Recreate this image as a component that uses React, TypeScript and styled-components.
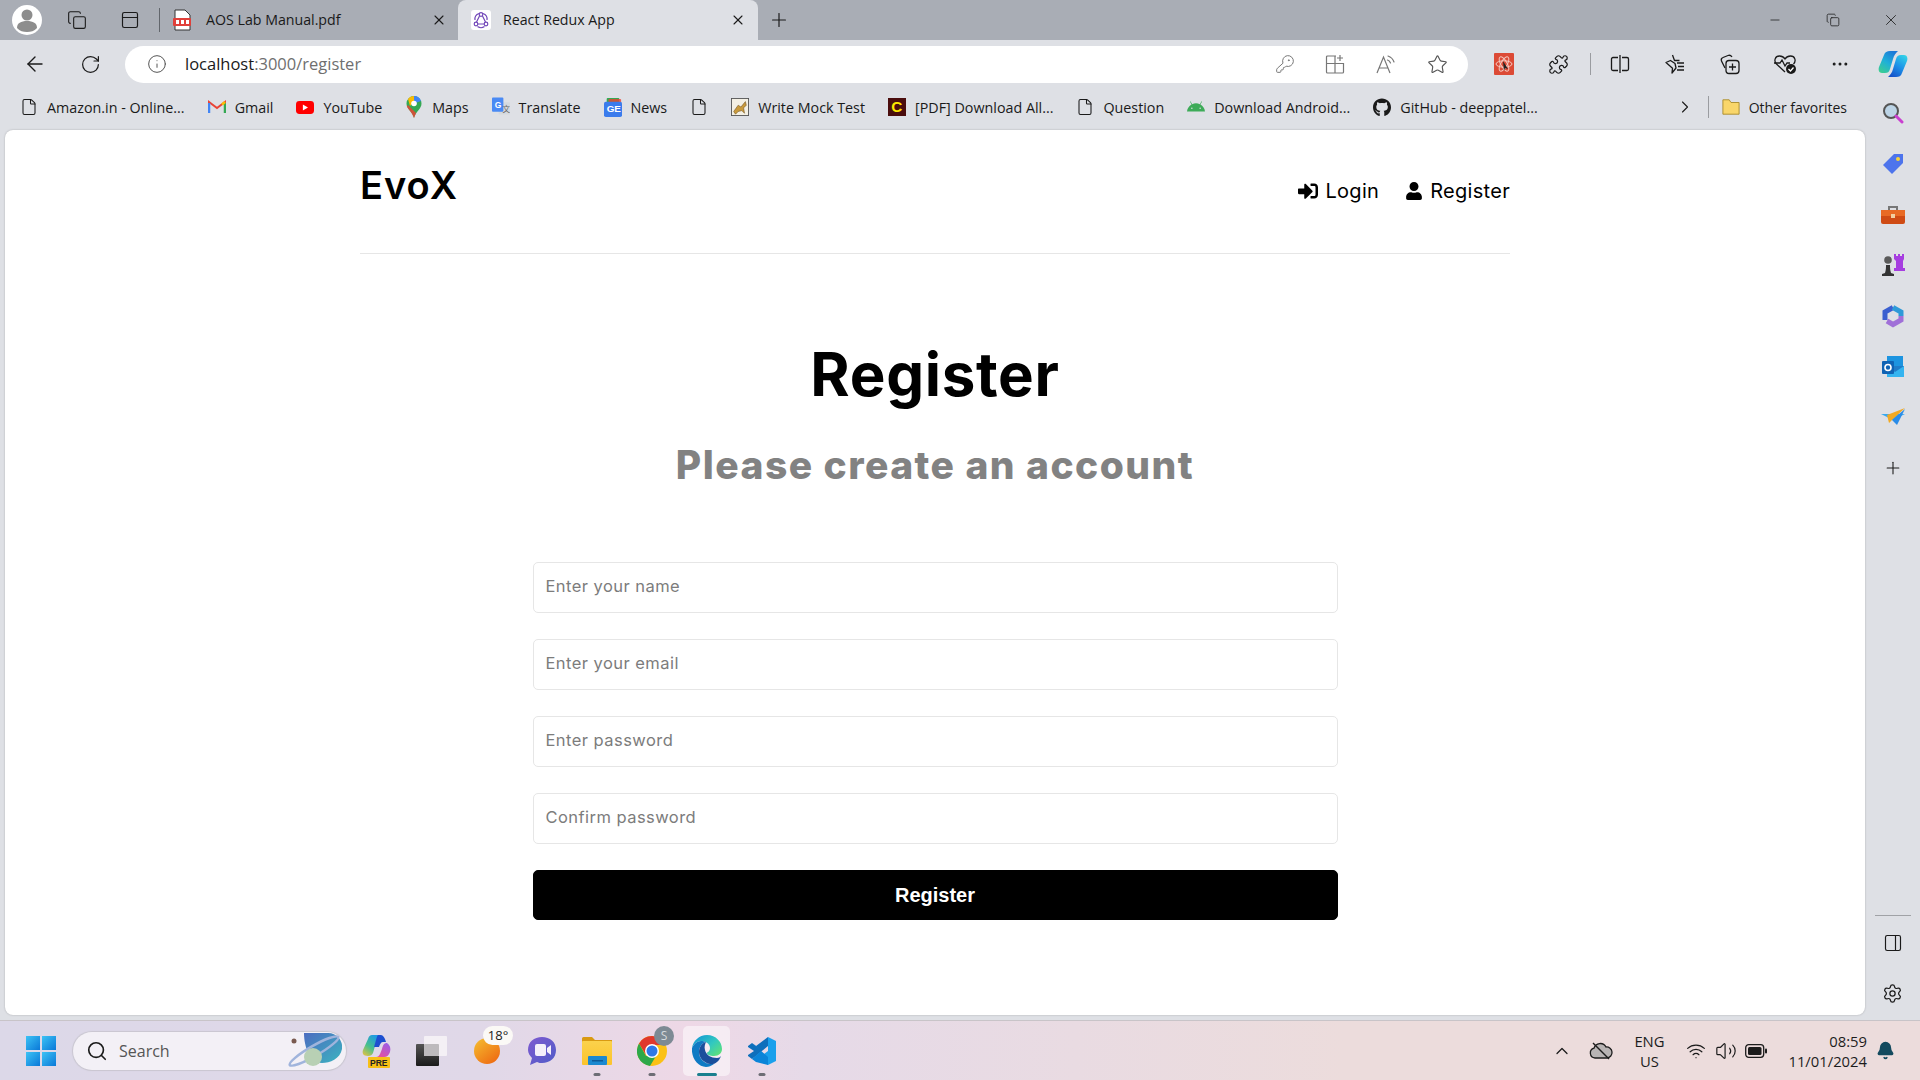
import React from 'react';
import styled, {createGlobalStyle} from 'styled-components';
import {
    ArrowLeft, RotateCw, Info, KeyRound, Star, Puzzle, Ellipsis, Plus, X, Minus, Search,
    ChevronRight, ChevronUp, Wifi, Volume2, Bell, Settings, File, Copy, PanelRight, PanelTop,
} from 'lucide-react';
import {FaSignInAlt, FaUser, FaGithub, FaAndroid} from 'react-icons/fa';

const GlobalStyle = createGlobalStyle`
html, body {
    margin: 0;
    padding: 0;
    background: #dee0e5;
}
* { box-sizing: border-box; }
`

const Screen = styled.div`
width: 1920px;
height: 1080px;
overflow: hidden;
display: flex;
flex-direction: column;
background: #dee0e5;
font-family: "Open Sans", "Noto Sans", sans-serif;
color: #1a1a1a;
`

/* browser chrome */
const TitleBar = styled.div`
height: 40px;
flex: none;
display: flex;
align-items: stretch;
background: #a9adb5;
padding-left: 12px;
`
const Avatar = styled.div`
width: 30px;
height: 30px;
margin-top: 5px;
border-radius: 50%;
background: #fff;
display: flex;
align-items: center;
justify-content: center;
`
const ChromeButton = styled.div<{$w?: number}>`
width: ${p => p.$w ?? 52}px;
display: flex;
align-items: center;
justify-content: center;
flex: none;
`
const TabDivider = styled.div`
width: 1px;
height: 24px;
background: #62666c;
`
const Tab = styled.div<{$active?: boolean}>`
width: ${p => p.$active ? 300 : 288}px;
display: flex;
align-items: center;
gap: ${p => p.$active ? 12 : 14}px;
padding: 0 ${p => p.$active ? 12 : 11}px 0 ${p => p.$active ? 13 : 2}px;
font-size: 14.2px;
background: ${p => p.$active ? '#dee0e5' : 'transparent'};
border-radius: 8px 8px 0 0;
`
const TabTitle = styled.span`
flex: 1;
white-space: nowrap;
margin-top: -2px;
`
const TitleSpacer = styled.div`
flex: 1;
`
const Toolbar = styled.div`
height: 48px;
flex: none;
display: flex;
align-items: center;
padding-left: 12px;
`
const NavButton = styled.div`
width: 46px;
height: 36px;
margin-right: 9px;
display: flex;
align-items: center;
justify-content: center;
flex: none;
`
const AddressBar = styled.div`
width: 1343px;
height: 37px;
flex: none;
margin-left: 3px;
background: #fff;
border-radius: 19px;
display: flex;
align-items: center;
padding: 0 20px 0 22px;
`
const Url = styled.span`
font-size: 16.5px;
margin: -2px 0 0 18px;
flex: 1;
color: #1a1a1a;
span { color: #6f6f6f; }
`
const UrlActions = styled.div`
display: flex;
gap: 30px;
align-items: center;
color: #777;
`
const ToolIcons = styled.div`
display: flex;
align-items: center;
flex: none;
padding-left: 8px;
`
const ToolSlot = styled.div<{$w?: number}>`
width: ${p => p.$w ?? 55}px;
display: flex;
align-items: center;
justify-content: center;
flex: none;
`
const ToolDivider = styled.div`
width: 1px;
height: 22px;
margin: 0 1px 0 4px;
background: #9a9ca0;
`

const Body = styled.div`
flex: 1;
min-height: 0;
display: flex;
`
const MainColumn = styled.div`
width: 1865px;
display: flex;
flex-direction: column;
`
const BookmarkBar = styled.div`
height: 38px;
flex: none;
margin-bottom: 4px;
display: flex;
align-items: center;
padding: 0 18px 0 20px;
font-size: 14.3px;
`
const Bookmark = styled.div`
display: flex;
align-items: center;
gap: 9px;
margin-right: 23px;
white-space: nowrap;
`
const OtherFavorites = styled(Bookmark)`
margin-right: 0;
font-size: 14px;
`
const BookmarkGlyph = styled.div`
width: 18px;
height: 18px;
display: flex;
align-items: center;
justify-content: center;
flex: none;
`
const BookmarkEnd = styled.div`
margin-left: auto;
display: flex;
align-items: center;
gap: 13px;
`
const BarDivider = styled.div`
width: 1px;
height: 22px;
background: #9a9ca0;
`

/* sidebar */
const SideBar = styled.div`
width: 55px;
display: flex;
flex-direction: column;
align-items: center;
padding-bottom: 1px;
`
const SideSlot = styled.div`
height: 50.7px;
width: 100%;
flex: none;
display: flex;
align-items: center;
justify-content: center;
`
const SideRule = styled.div`
width: 36px;
height: 1px;
background: #a0a2a6;
margin: auto 0 2px;
`

/* the page itself */
const Page = styled.div`
flex: 1;
margin: 0 0 5px 5px;
background: #fff;
border-radius: 8px;
display: flex;
justify-content: center;
box-shadow: 0 0 2px rgba(0,0,0,0.25);
`
const Container = styled.div`
width: 1150px;
font-family: Inter, sans-serif;
color: #000;
`
const Header = styled.header`
height: 124px;
display: flex;
justify-content: space-between;
border-bottom: 1px solid #e6e6e6;
`
const Logo = styled.div`
font-size: 38px;
font-weight: 600;
line-height: 46px;
margin-top: 32px;
letter-spacing: 1px;
`
const NavList = styled.ul`
list-style: none;
display: flex;
gap: 26px;
margin: 47px 0 0;
padding: 0;
`
const NavItem = styled.li`
display: flex;
align-items: center;
gap: 7px;
font-size: 20px;
height: 28px;
letter-spacing: 0.3px;
`
const Heading = styled.section`
text-align: center;
padding-top: 84px;
`
const Title = styled.h1`
margin: 0;
font-size: 60px;
font-weight: 700;
line-height: 72px;
letter-spacing: 0.7px;
`
const Subtitle = styled.p`
margin: 27px 0 0;
font-size: 39px;
font-weight: 800;
line-height: 56px;
color: #828282;
letter-spacing: 1.45px;
`
const Form = styled.form`
width: 805px;
margin: 69px auto 0;
display: flex;
flex-direction: column;
gap: 26px;
`
const Input = styled.input`
height: 51px;
width: 100%;
padding: 0 12px 3px;
border: 1px solid #e6e6e6;
border-radius: 5px;
font-family: Inter, sans-serif;
font-size: 16.500px;
letter-spacing: 0.45px;
outline: none;
&::placeholder { color: #7c7c7c; }
`
const Submit = styled.button`
height: 50px;
border: 1px solid #000;
border-radius: 5px;
background: #000;
color: #fff;
font-family: "Liberation Sans", Arial, sans-serif;
font-size: 20px;
font-weight: 700;
`

/* taskbar */
const Taskbar = styled.div`
height: 60px;
flex: none;
display: flex;
align-items: center;
padding-left: 26px;
background: linear-gradient(90deg, #dcd8e8 0%, #e0d8e8 25%, #eed8e6 36%, #e6dae8 42%, #ecdcdc 70%, #ecdcdc 100%);
border-top: 1px solid #c8c4c8;
`
const StartLogo = styled.div`
width: 30px;
height: 30px;
display: grid;
grid-template-columns: 1fr 1fr;
gap: 2px;
flex: none;
`
const StartPane = styled.span`
background: linear-gradient(135deg, #3cc3f5, #0a78d8);
`
const SearchPill = styled.div`
width: 273px;
height: 38px;
margin: 0 3px 0 17px;
border-radius: 19px;
background: #f3f0f6;
box-shadow: 0 0 1px 1px #c9c6d0;
display: flex;
align-items: center;
gap: 11px;
padding-left: 13px;
font-size: 16px;
color: #555;
position: relative;
flex: none;
`
const SearchArt = styled.div`
position: absolute;
right: 4px;
top: 1px;
`
const TaskSlot = styled.div<{$active?: boolean}>`
width: ${p => p.$active ? 47 : 55}px;
height: 50px;
margin: 0 ${p => p.$active ? 4 : 0}px;
flex: none;
display: flex;
align-items: center;
justify-content: center;
position: relative;
background: ${p => p.$active ? 'rgba(255,255,255,0.5)' : 'transparent'};
border-radius: 5px;
`
const TaskDot = styled.span<{$active?: boolean}>`
position: absolute;
bottom: 0;
left: 50%;
transform: translateX(-50%);
width: ${p => p.$active ? 20 : 7}px;
height: 3px;
border-radius: 2px;
background: ${p => p.$active ? '#1a7f8e' : '#6d6d75'};
`
const WeatherBadge = styled.span`
position: absolute;
top: 0;
left: 24px;
width: 30px;
height: 19px;
border-radius: 10px;
background: #fbf9f6;
font-size: 13px;
line-height: 19px;
text-align: center;
`
const ChromeBadge = styled.span`
position: absolute;
top: 0;
left: 30px;
width: 20px;
height: 20px;
border-radius: 50%;
background: #7d8a94;
color: #d6dadd;
font-size: 12px;
line-height: 20px;
text-align: center;
`
const Tray = styled.div`
margin-left: auto;
display: flex;
align-items: center;
height: 100%;
padding-right: 23px;
font-size: 14.8px;
color: #1c1c1c;
`
const TrayIcon = styled.div<{$w: number}>`
width: ${p => p.$w}px;
display: flex;
align-items: center;
justify-content: center;
svg { flex: none; }
`
const Lang = styled.div`
width: 50px;
text-align: center;
line-height: 20px;
`
const Clock = styled.div`
margin: 0 6px 0 10px;
text-align: right;
line-height: 20px;
`

const PdfIcon = () => (
    <svg width="20" height="22" viewBox="0 0 20 22">
        <path d="M3 1h10l5 5v15H3z" fill="#fff" stroke="#333" />
        <rect x="1" y="9" width="18" height="8" rx="1" fill="#e0403a" />
        <rect x="4" y="11" width="3" height="4" fill="#fff" />
        <rect x="9" y="11" width="3" height="4" fill="#fff" />
        <rect x="14" y="11" width="3" height="4" fill="#fff" />
    </svg>
)

const ReduxIcon = () => (
    <svg width="20" height="20" viewBox="0 0 20 20" fill="none" stroke="#7248b9" strokeWidth="1.200">
        <rect width="20" height="20" rx="3" fill="#fff" stroke="none" />
        <circle cx="10" cy="4.500" r="1.800" />
        <circle cx="5" cy="14" r="1.800" />
        <circle cx="15" cy="14" r="1.800" />
        <path d="M6.800 14h6.400M8.500 6 5.500 12M11.500 6l3 6" />
        <path d="M4 10a6 6 0 0 1 4-6.500M16 10a6 6 0 0 0-4-6.500M6.500 16.500a6 6 0 0 0 7 0" />
    </svg>
)

const GmailIcon = () => (
    <svg width="18" height="14" viewBox="0 0 18 14" fill="none">
        <path d="M1 13V2l8 6 8-6v11" stroke="#ea4335" strokeWidth="2" />
        <path d="M1 13V3" stroke="#4285f4" strokeWidth="2.500" />
        <path d="M17 13V3" stroke="#34a853" strokeWidth="2.500" />
        <path d="M14 4.500 17 2" stroke="#fbbc04" strokeWidth="2.500" />
    </svg>
)

const YoutubeIcon = () => (
    <svg width="21" height="15" viewBox="0 0 21 15">
        <rect width="21" height="15" rx="4" fill="#f00" />
        <path d="M8 4v7l6-3.500z" fill="#fff" />
    </svg>
)

const MapsIcon = () => (
    <svg width="16" height="22" viewBox="0 0 16 22">
        <path d="M8 0a7.500 7.500 0 0 1 7.500 7.500C15.500 13 10 15 8 22 6 15 .5 13 .5 7.500A7.500 7.500 0 0 1 8 0z" fill="#34a853" />
        <path d="M2 3a7.500 7.500 0 0 1 6-3v5L4 10z" fill="#fbbc04" />
        <path d="M8 0a7.500 7.500 0 0 1 7 5L8 7.500z" fill="#4285f4" />
        <path d="M.8 10.500C2 13 6 16 8 22l2-5-8-8z" fill="#ea4335" opacity="0.85" />
        <circle cx="8" cy="7.500" r="2.800" fill="#fff" />
    </svg>
)

const TranslateIcon = () => (
    <svg width="19" height="20" viewBox="0 0 19 20">
        <rect x="7" y="5" width="12" height="13" rx="1" fill="#d5d9de" />
        <rect width="12" height="15" rx="1" fill="#4a8af4" />
        <text x="3" y="11" fontSize="9" fontWeight="700" fill="#fff" fontFamily="Liberation Sans">G</text>
        <text x="11" y="15" fontSize="8" fill="#666" fontFamily="Noto Sans CJK SC">文</text>
    </svg>
)

const NewsIcon = () => (
    <svg width="20" height="21" viewBox="0 0 20 21">
        <rect x="3" y="0" width="14" height="6" rx="1" fill="#34a853" />
        <rect x="5" y="1" width="14" height="6" rx="1" fill="#ea4335" opacity="0.8" />
        <rect y="4" width="20" height="17" rx="2" fill="#3a7bec" />
        <text x="3" y="16" fontSize="11" fontWeight="700" fill="#fff" fontFamily="Liberation Sans">GE</text>
    </svg>
)

const TomcatIcon = () => (
    <svg width="20" height="20" viewBox="0 0 20 20">
        <rect x=".5" y=".5" width="19" height="19" fill="#f4f0e4" stroke="#555" />
        <path d="M3 15 8 8l3 2 5-6 1 4-3 3 1 6-3-3-4 1-3 3z" fill="#c99a3c" stroke="#6b4a1a" strokeWidth=".6" />
    </svg>
)

const CIcon = () => (
    <svg width="20" height="20" viewBox="0 0 20 20">
        <rect width="20" height="20" fill="#4a0d0d" />
        <text x="3.500" y="16" fontSize="17" fontWeight="700" fill="#ffe600" fontFamily="Liberation Sans">C</text>
    </svg>
)

const ReactExtIcon = () => (
    <svg width="20" height="22" viewBox="0 0 20 22">
        <rect width="20" height="22" rx="1" fill="#dc4a35" />
        <g fill="none" stroke="#f5c9c0" strokeWidth="1">
            <ellipse cx="10" cy="11" rx="8" ry="3.200" />
            <ellipse cx="10" cy="11" rx="8" ry="3.200" transform="rotate(60 10 11)" />
            <ellipse cx="10" cy="11" rx="8" ry="3.200" transform="rotate(120 10 11)" />
        </g>
        <path d="M9 8l5 8-3-1-1 3z" fill="#222" />
    </svg>
)

const ReadAloudIcon = () => (
    <svg width="22" height="22" viewBox="0 0 22 22" fill="none" stroke="currentColor" strokeWidth="1.200">
        <path d="M2 20 8.500 4 15 20M4.500 15h8" />
        <path d="M13 3c3 1 5 3 6 6M12.500 7c1.500.5 2.500 1.500 3 3" strokeLinecap="round" />
    </svg>
)

const AddTabIcon = () => (
    <svg width="20" height="20" viewBox="0 0 20 20" fill="none" stroke="currentColor" strokeWidth="1.200">
        <path d="M11 2H2.500a1 1 0 0 0-1 1v15a1 1 0 0 0 1 1h15a1 1 0 0 0 1-1V9.500H1.500M10 2.500V19M15 1v6M12 4h6" />
    </svg>
)

const SplitIcon = () => (
    <svg width="20" height="20" viewBox="0 0 20 20" fill="none" stroke="#1a1a1a" strokeWidth="1.300">
        <path d="M8 3.500H3a1.500 1.500 0 0 0-1.500 1.500v10A1.500 1.500 0 0 0 3 16.500h5M12 3.500h5A1.500 1.500 0 0 1 18.500 5v10a1.500 1.500 0 0 1-1.500 1.500h-5M10 1v18" />
    </svg>
)

const FavoritesIcon = () => (
    <svg width="22" height="22" viewBox="0 0 22 22" fill="none" stroke="#1a1a1a" strokeWidth="1.300" strokeLinejoin="round">
        <path d="M8.500 2 10.500 7.500H15.500M11 10.500 12 15 8 20l.5-4.800L2 9.500 6.500 7.500z" />
        <path d="M13 10h7M14 13.500h6M13 17h7" />
    </svg>
)

const CollectionsIcon = () => (
    <svg width="22" height="22" viewBox="0 0 22 22" fill="none" stroke="#1a1a1a" strokeWidth="1.300">
        <path d="M6 15 2.500 8c-.5-1.500 0-3 1.500-3.500L9 2.500c2-.8 3 0 4 1.500" />
        <rect x="7" y="7.500" width="13" height="13" rx="3" />
        <path d="M13.500 10.500v7M10 14h7" />
    </svg>
)

const HealthIcon = () => (
    <svg width="24" height="22" viewBox="0 0 24 22" fill="none" stroke="#1a1a1a" strokeWidth="1.300">
        <path d="M12 19 3.500 11C.5 8 2 3 6.500 3 9 3 11 4.500 12 6c1-1.500 3-3 5.500-3 4.500 0 6 5 3 8" />
        <path d="M1 10h6l2-3 3 6 2-3h3" />
        <circle cx="18" cy="16" r="5" fill="#1a1a1a" stroke="none" />
        <path d="M15.500 16l2 2 3-3.500" stroke="#fff" />
    </svg>
)

const CopilotIcon = () => (
    <svg width="30" height="30" viewBox="0 0 30 30">
        <defs>
            <linearGradient id="cpA" x1="0.1" y1="1" x2="0.7" y2="0">
                <stop offset="0" stopColor="#3ecf8e" />
                <stop offset="0.5" stopColor="#1fb0d8" />
                <stop offset="1" stopColor="#1c78d8" />
            </linearGradient>
            <linearGradient id="cpB" x1="0.2" y1="1" x2="0.8" y2="0">
                <stop offset="0" stopColor="#1550c8" />
                <stop offset="0.5" stopColor="#1c90e8" />
                <stop offset="1" stopColor="#32d0e8" />
            </linearGradient>
        </defs>
        <path d="M12 2h8c-2 2-4 4-5 8l-3 10c-1 3-2 4-5 4H4C1 24 0 21 1 18L6 6c1-3 3-4 6-4z" fill="url(#cpA)" />
        <path d="M18 28h-8c2-2 4-4 5-8l3-10c1-3 2-4 5-4h3c3 0 4 3 3 6l-5 12c-1 3-3 4-6 4z" fill="url(#cpB)" />
    </svg>
)

const MagnifierIcon = () => (
    <svg width="22" height="22" viewBox="0 0 22 22">
        <circle cx="9" cy="9" r="7" fill="#bcd4e6" stroke="#555" strokeWidth="2" />
        <path d="M14 14l6 6" stroke="#c93fd0" strokeWidth="3" strokeLinecap="round" />
    </svg>
)

const TagIcon = () => (
    <svg width="22" height="22" viewBox="0 0 22 22">
        <path d="M12 1h9v9L10 21 1 12z" fill="#4d74ec" />
        <circle cx="16" cy="6" r="2" fill="#f6d23c" />
    </svg>
)

const ToolboxIcon = () => (
    <svg width="24" height="20" viewBox="0 0 24 20">
        <path d="M8 5V2h8v3" fill="none" stroke="#777" strokeWidth="2" />
        <rect y="5" width="24" height="14" rx="2" fill="#cf4b14" />
        <rect y="5" width="24" height="6" fill="#e86a24" />
        <rect x="10" y="9" width="4" height="4" fill="#f2cfa0" />
    </svg>
)

const ChessIcon = () => (
    <svg width="24" height="24" viewBox="0 0 24 24">
        <path d="M13 1h2v2h2V1h2v2h2V1h2v5l-1 2v7h2v3H13v-3h2V8l-2-2z" fill="#a63ee0" />
        <circle cx="7" cy="7" r="3.800" fill="#5a5a5a" />
        <path d="M1 23v-2l3-1c1-3 1-6 1-8h4c0 2 0 5 1 8l3 1v2z" fill="#333" />
    </svg>
)

const OfficeIcon = () => (
    <svg width="22" height="24" viewBox="0 0 22 24" fill="none">
        <path d="M11 3.500 3 8v8" stroke="#3a5fd0" strokeWidth="5" />
        <path d="M11 3.500 19 8v4" stroke="#2e9ad8" strokeWidth="5" />
        <path d="M19 12v4l-8 4.500L5 17" stroke="#a070d8" strokeWidth="5" />
    </svg>
)

const OutlookIcon = () => (
    <svg width="22" height="22" viewBox="0 0 22 22">
        <rect x="5" width="16" height="10" fill="#1c94e0" />
        <path d="M5 10h17v11H5z" fill="#34b4f0" />
        <path d="M5 10l8 6 9-6" fill="#1f7cc8" />
        <rect y="5" width="12" height="13" rx="1" fill="#0f63b4" />
        <circle cx="6" cy="11.500" r="3" fill="none" stroke="#fff" strokeWidth="1.600" />
    </svg>
)

const SendIcon = () => (
    <svg width="24" height="18" viewBox="0 0 24 18">
        <path d="M0 6h24L12 12 8 10z" fill="#37a9f0" />
        <path d="M24 0 6 7l2 8 3-3z" fill="#f2a922" />
        <path d="M24 1 16 17 11 12z" fill="#2a8ce8" />
    </svg>
)

const CopilotPre = () => (
    <svg width="30" height="36" viewBox="0 0 30 36">
        <defs>
            <linearGradient id="preA" x1="0" y1="1" x2="0.6" y2="0">
                <stop offset="0" stopColor="#f0c23c" />
                <stop offset="0.5" stopColor="#46c08c" />
                <stop offset="1" stopColor="#1f9be0" />
            </linearGradient>
            <linearGradient id="preB" x1="0.2" y1="1" x2="0.8" y2="0">
                <stop offset="0" stopColor="#e8509c" />
                <stop offset="1" stopColor="#9a5ce8" />
            </linearGradient>
        </defs>
        <path d="M10 2h8c-3 3-4 7-5 11l-2 7c-1 2-2 3-5 3C1 23 0 20 1 17L6 6c1-3 2-4 4-4z" fill="url(#preA)" />
        <path d="M14 24h8c3 0 5-2 6-5 1-4 0-7-3-9-3 0-4 2-5 6l-2 5c-1 2-2 3-4 3z" fill="url(#preB)" />
        <path d="M16 2h3c2 0 4 3 5 7h-3c-2 0-3 2-4 5l-5 0 2-7c1-3 1-4 2-5z" fill="#1d4fd0" />
        <rect x="6" y="24" width="22" height="11" rx="1" fill="#f7c016" />
        <text x="8" y="33" fontSize="8.500" fontWeight="700" fill="#222" fontFamily="Liberation Sans">PRE</text>
    </svg>
)

const StoreIcon = () => (
    <svg width="32" height="30" viewBox="0 0 32 30">
        <defs>
            <linearGradient id="storeD" x1="0" y1="0" x2="0" y2="1">
                <stop offset="0" stopColor="#555" />
                <stop offset="1" stopColor="#1a1a1a" />
            </linearGradient>
        </defs>
        <rect y="8" width="23" height="22" rx="1" fill="url(#storeD)" />
        <rect x="8" y="0" width="23" height="20" rx="1" fill="#f6f3f6" opacity="0.9" />
        <rect x="8" y="8" width="15" height="12" rx="1" fill="#bdbabd" />
    </svg>
)

const WeatherIcon = () => (
    <svg width="26" height="26" viewBox="0 0 26 26">
        <defs>
            <linearGradient id="sun" x1="0" y1="0" x2="0.8" y2="1">
                <stop offset="0" stopColor="#f5c030" />
                <stop offset="1" stopColor="#ee6a12" />
            </linearGradient>
        </defs>
        <circle cx="13" cy="13" r="13" fill="url(#sun)" />
    </svg>
)

const MeetIcon = () => (
    <svg width="30" height="30" viewBox="0 0 30 30">
        <defs>
            <linearGradient id="meet" x1="0" y1="0" x2="1" y2="1">
                <stop offset="0" stopColor="#7e5ad0" />
                <stop offset="1" stopColor="#4f5cc8" />
            </linearGradient>
        </defs>
        <path d="M15 1c8 0 14 5 14 13s-6 13-14 13c-2 0-3 0-5-1l-7 3 2-7c-2-2-4-5-4-8C1 6 7 1 15 1z" fill="url(#meet)" />
        <rect x="8" y="8" width="11" height="12" rx="2" fill="#f4f0fa" />
        <path d="M20 12l4-3v10l-4-3z" fill="#f4f0fa" />
    </svg>
)

const FolderIcon = () => (
    <svg width="30" height="28" viewBox="0 0 30 28">
        <defs>
            <linearGradient id="fold" x1="0" y1="0" x2="0" y2="1">
                <stop offset="0" stopColor="#fbd24c" />
                <stop offset="1" stopColor="#fcc32c" />
            </linearGradient>
        </defs>
        <path d="M0 1.500A1.500 1.500 0 0 1 1.500 0H10l3 3h17v6H0z" fill="#d99a12" />
        <rect y="4" width="30" height="24" rx="1" fill="url(#fold)" />
        <rect x="6" y="19" width="19" height="9" rx="1" fill="#1b88d0" />
        <rect x="10" y="23" width="11" height="1.500" fill="#0d5a98" />
    </svg>
)

const ChromeIcon = () => (
    <svg width="30" height="30" viewBox="0 0 30 30">
        <circle cx="15" cy="15" r="15" fill="#fbc116" />
        <path d="M15 0a15 15 0 0 0-13 7.500L9 19 15 9h13A15 15 0 0 0 15 0z" fill="#e0382c" />
        <path d="M2 7.500A15 15 0 0 0 13 30l6-10H9z" fill="#2ea84a" />
        <circle cx="15" cy="15" r="7" fill="#fff" />
        <circle cx="15" cy="15" r="5.500" fill="#2e78e8" />
    </svg>
)

const EdgeIcon = () => (
    <svg width="30" height="32" viewBox="0 0 30 32">
        <defs>
            <linearGradient id="edgeA" x1="0" y1="0" x2="1" y2="0.8">
                <stop offset="0" stopColor="#0e8fd8" />
                <stop offset="0.6" stopColor="#32c8c0" />
                <stop offset="1" stopColor="#5ce07c" />
            </linearGradient>
        </defs>
        <path d="M15 0c9 0 15 7 15 14 0 4-3 7-8 7-4 0-7-1-7-3 0-1 3-1 3-5 0-4-4-7-9-7C5 6 2 9 0 13 1 6 7 0 15 0z" fill="url(#edgeA)" />
        <path d="M0 13c2-4 5-7 9-7 2 0 3 0 5 1-4 1-7 5-7 10 0 7 6 13 15 12-3 2-5 3-8 3C6 32-1 23 0 13z" fill="#0f7ac4" />
        <path d="M7 17c0-5 3-9 7-10-1 2-2 5-1 8 1 5 6 8 12 8 2 0 3-1 4-2-2 6-7 9-11 8-6-1-11-6-11-12z" fill="#1a4f9c" />
    </svg>
)

const VsCodeIcon = () => (
    <svg width="30" height="30" viewBox="0 0 30 30">
        <path d="M21 1 29 5v20l-8 4-8-8 8-6z" fill="#1aa0ec" />
        <path d="M21 1v9L9 20l-4 3-4-3v-1l6-4-6-4v-1l4-3 4 3z" fill="#0d6fbc" />
        <path d="M21 29v-8L5 7l4 3 12-9-12 9 5 5-9 8 4 3z" fill="#0a84d8" />
    </svg>
)

const SearchArtwork = () => (
    <svg width="56" height="36" viewBox="0 0 56 36">
        <defs>
            <linearGradient id="planet" x1="0" y1="0" x2="1" y2="1">
                <stop offset="0" stopColor="#4c6cc0" />
                <stop offset="1" stopColor="#3cb4c0" />
            </linearGradient>
        </defs>
        <path d="M18 0h24a14 14 0 0 1 14 16C54 26 44 30 36 30 24 30 18 14 18 0z" fill="url(#planet)" />
        <ellipse cx="28" cy="18" rx="28" ry="5" transform="rotate(-30 28 18)" fill="none" stroke="#a0b4dc" strokeWidth="2.500" />
        <circle cx="27" cy="24" r="9" fill="#b8d0b4" />
        <circle cx="8" cy="8" r="2.500" fill="#7a5a50" />
    </svg>
)

const DeviceIcon = () => (
    <svg width="30" height="30" viewBox="0 0 30 30">
        <circle cx="15" cy="10" r="5.500" fill="#8d8d8d" />
        <path d="M5 23c0-5 4-7 10-7s10 2 10 7c-3 3-6 4-10 4s-7-1-10-4z" fill="#8d8d8d" />
    </svg>
)

const FolderBookmark = () => (
    <svg width="20" height="18" viewBox="0 0 20 18">
        <path d="M1 1h7l2 3h9v13H1z" fill="#f9d66a" stroke="#a88a2a" />
    </svg>
)

const CloudOffIcon = () => (
    <svg width="24" height="20" viewBox="0 0 24 20">
        <path d="M6 17a5 5 0 0 1-1-9.800A6.500 6.500 0 0 1 17 6a5.500 5.500 0 0 1 1 11z" fill="#b8b4b4" stroke="#1c1c1c" strokeWidth="1.300" />
        <path d="M4 2l16 16" stroke="#1c1c1c" strokeWidth="1.400" />
    </svg>
)

const BatteryIcon = () => (
    <svg width="22" height="14" viewBox="0 0 22 14">
        <rect x=".7" y=".7" width="18" height="12.600" rx="3" fill="none" stroke="#1c1c1c" strokeWidth="1.300" />
        <rect x="3" y="3" width="13.500" height="8" rx="1.500" fill="#1c1c1c" />
        <rect x="20" y="4.500" width="2" height="5" rx="1" fill="#1c1c1c" />
    </svg>
)

const bookmarks: {label: string; glyph: React.ReactNode}[] = [
    {label: 'Amazon.in - Online...', glyph: <File size={18} strokeWidth={1.4} />},
    {label: 'Gmail', glyph: <GmailIcon />},
    {label: 'YouTube', glyph: <YoutubeIcon />},
    {label: 'Maps', glyph: <MapsIcon />},
    {label: 'Translate', glyph: <TranslateIcon />},
    {label: 'News', glyph: <NewsIcon />},
    {label: '', glyph: <File size={18} strokeWidth={1.4} />},
    {label: 'Write Mock Test', glyph: <TomcatIcon />},
    {label: '[PDF] Download All...', glyph: <CIcon />},
    {label: 'Question', glyph: <File size={18} strokeWidth={1.4} />},
    {label: 'Download Android...', glyph: <FaAndroid size={19} color="#3dab58" />},
    {label: 'GitHub - deeppatel...', glyph: <FaGithub size={19} color="#1a1a1a" />},
]

const sideIcons = [<MagnifierIcon />, <TagIcon />, <ToolboxIcon />, <ChessIcon />, <OfficeIcon />, <OutlookIcon />, <SendIcon />, <Plus size={20} strokeWidth={1.3} />]

const placeholders = ['Enter your name', 'Enter your email', 'Enter password', 'Confirm password']

const App: React.FC = () => {
    return (
        <Screen>
            <GlobalStyle />
            <TitleBar>
                <Avatar><DeviceIcon /></Avatar>
                <ChromeButton $w={70}><Copy size={20} strokeWidth={1.3} /></ChromeButton>
                <ChromeButton $w={36}><PanelTop size={20} strokeWidth={1.4} /></ChromeButton>
                <ChromeButton $w={22}><TabDivider /></ChromeButton>
                <Tab>
                    <PdfIcon />
                    <TabTitle>AOS Lab Manual.pdf</TabTitle>
                    <X size={16} strokeWidth={1.6} />
                </Tab>
                <Tab $active>
                    <ReduxIcon />
                    <TabTitle>React Redux App</TabTitle>
                    <X size={16} strokeWidth={1.6} />
                </Tab>
                <ChromeButton $w={42}><Plus size={22} strokeWidth={1.3} /></ChromeButton>
                <TitleSpacer />
                <ChromeButton $w={58}><Minus size={14} strokeWidth={1.3} /></ChromeButton>
                <ChromeButton $w={58}><Copy size={14} strokeWidth={1.3} /></ChromeButton>
                <ChromeButton $w={58}><X size={18} strokeWidth={1.1} /></ChromeButton>
            </TitleBar>

            <Toolbar>
                <NavButton><ArrowLeft size={24} strokeWidth={1.4} /></NavButton>
                <NavButton><RotateCw size={21} strokeWidth={1.4} /></NavButton>
                <AddressBar>
                    <Info size={20} strokeWidth={1.2} color="#555" />
                    <Url>localhost<span>:3000/register</span></Url>
                    <UrlActions>
                        <KeyRound size={20} strokeWidth={1.2} />
                        <AddTabIcon />
                        <ReadAloudIcon />
                        <Star size={21} strokeWidth={1.3} color="#555" />
                    </UrlActions>
                </AddressBar>
                <ToolIcons>
                    <ToolSlot><ReactExtIcon /></ToolSlot>
                    <ToolSlot><Puzzle size={21} strokeWidth={1.4} /></ToolSlot>
                    <ToolDivider />
                    <ToolSlot><SplitIcon /></ToolSlot>
                    <ToolSlot><FavoritesIcon /></ToolSlot>
                    <ToolSlot><CollectionsIcon /></ToolSlot>
                    <ToolSlot><HealthIcon /></ToolSlot>
                    <ToolSlot><Ellipsis size={20} strokeWidth={1.6} /></ToolSlot>
                    <ToolSlot $w={51}><CopilotIcon /></ToolSlot>
                </ToolIcons>
            </Toolbar>

            <Body>
                <MainColumn>
                    <BookmarkBar>
                        {bookmarks.map((b, i) => (
                            <Bookmark key={i}>
                                <BookmarkGlyph>{b.glyph}</BookmarkGlyph>
                                {b.label && <span>{b.label}</span>}
                            </Bookmark>
                        ))}
                        <BookmarkEnd>
                            <ChevronRight size={20} strokeWidth={1.3} />
                            <BarDivider />
                            <OtherFavorites>
                                <BookmarkGlyph><FolderBookmark /></BookmarkGlyph>
                                <span>Other favorites</span>
                            </OtherFavorites>
                        </BookmarkEnd>
                    </BookmarkBar>
                    <Page>
                        <Container>
                            <Header>
                                <Logo>EvoX</Logo>
                                <NavList>
                                    <NavItem><FaSignInAlt size={20} /> Login</NavItem>
                                    <NavItem><FaUser size={18} /> Register</NavItem>
                                </NavList>
                            </Header>
                            <Heading>
                                <Title>Register</Title>
                                <Subtitle>Please create an account</Subtitle>
                            </Heading>
                            <Form onSubmit={e => e.preventDefault()}>
                                {placeholders.map(p => <Input key={p} placeholder={p} />)}
                                <Submit type="submit">Register</Submit>
                            </Form>
                        </Container>
                    </Page>
                </MainColumn>
                <SideBar>
                    {sideIcons.map((icon, i) => <SideSlot key={i}>{icon}</SideSlot>)}
                    <SideRule />
                    <SideSlot><PanelRight size={20} strokeWidth={1.4} /></SideSlot>
                    <SideSlot><Settings size={21} strokeWidth={1.4} /></SideSlot>
                </SideBar>
            </Body>

            <Taskbar>
                <StartLogo><StartPane /><StartPane /><StartPane /><StartPane /></StartLogo>
                <SearchPill>
                    <Search size={22} strokeWidth={1.8} color="#1a1a1a" />
                    Search
                    <SearchArt><SearchArtwork /></SearchArt>
                </SearchPill>
                <TaskSlot><CopilotPre /></TaskSlot>
                <TaskSlot><StoreIcon /></TaskSlot>
                <TaskSlot><WeatherIcon /><WeatherBadge>18°</WeatherBadge></TaskSlot>
                <TaskSlot><MeetIcon /></TaskSlot>
                <TaskSlot><FolderIcon /><TaskDot /></TaskSlot>
                <TaskSlot><ChromeIcon /><ChromeBadge>S</ChromeBadge><TaskDot /></TaskSlot>
                <TaskSlot $active><EdgeIcon /><TaskDot $active /></TaskSlot>
                <TaskSlot><VsCodeIcon /><TaskDot /></TaskSlot>
                <Tray>
                    <TrayIcon $w={30}><ChevronUp size={20} strokeWidth={1.5} /></TrayIcon>
                    <TrayIcon $w={47}><CloudOffIcon /></TrayIcon>
                    <Lang>ENG<br />US</Lang>
                    <TrayIcon $w={44}><Wifi size={20} strokeWidth={1.5} /></TrayIcon>
                    <TrayIcon $w={16}><Volume2 size={22} strokeWidth={1.3} /></TrayIcon>
                    <TrayIcon $w={44}><BatteryIcon /></TrayIcon>
                    <Clock>08:59<br />11/01/2024</Clock>
                    <TrayIcon $w={24}><Bell size={19} color="#134a5e" fill="#134a5e" /></TrayIcon>
                </Tray>
            </Taskbar>
        </Screen>
    )
}

export default App;
